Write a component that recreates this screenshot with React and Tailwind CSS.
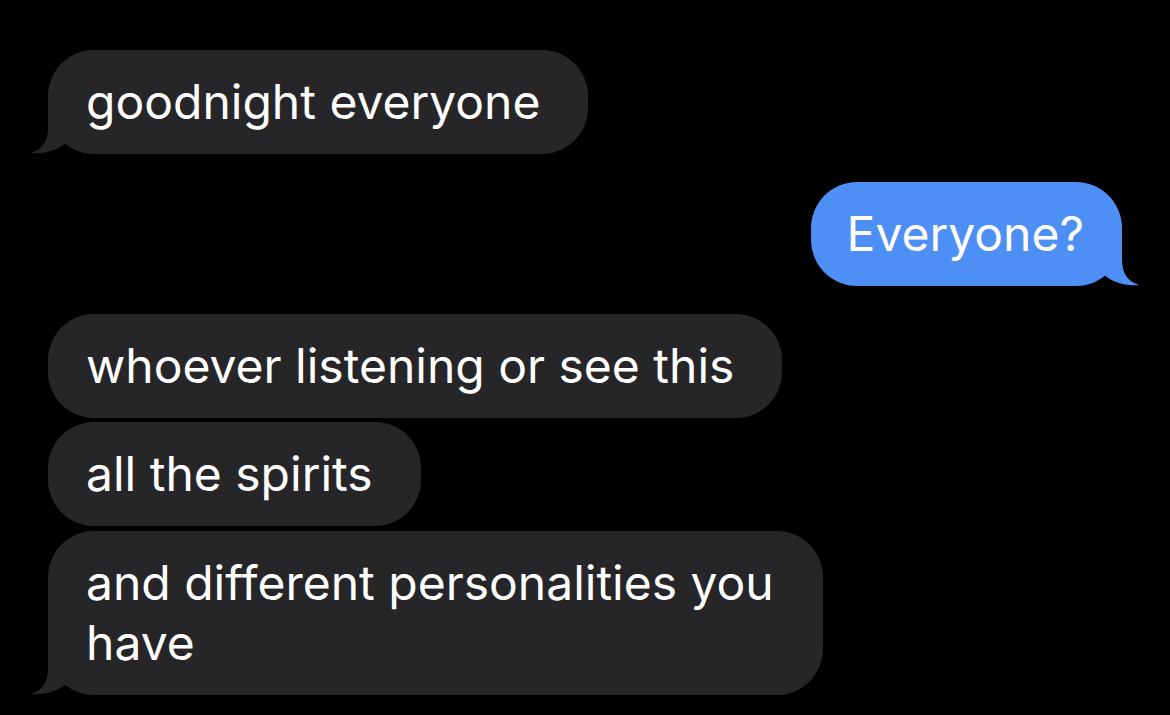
import React from 'react';

const Tail = ({ side, color }) => (
  <svg
    className={side === 'left' ? 'absolute left-[-17px] bottom-0' : 'absolute right-[-17px] bottom-0 -scale-x-100'}
    width="40"
    height="50"
    viewBox="0 0 40 50"
  >
    <path d="M17 0 L17 23 C17 37 12 45 0 49 C14 50.5 27 46 36 38 L40 30 L40 0 Z" fill={color} />
  </svg>
);

const Bubble = ({ text, tail, out, className = '' }) => (
  <div
    className={`relative rounded-[46px] pt-[22px] pb-[22px] text-[48px] leading-[60px] text-white max-w-[775px] ${
      out ? 'bg-[#4d8ff5] self-end mr-[48px] pl-[36px] pr-[38px]' : 'bg-[#262628] self-start pl-[38px] pr-[48px]'
    } ${className}`}
  >
    {tail && <Tail side={out ? 'right' : 'left'} color={out ? '#4d8ff5' : '#262628'} />}
    <span className="relative">{text}</span>
  </div>
);

export default function App() {
  return (
    <div
      className="w-[1170px] h-[715px] bg-black overflow-hidden flex flex-col pt-[50px] pl-[48px]"
      style={{ fontFamily: 'Inter, "Liberation Sans", sans-serif' }}
    >
      <Bubble text="goodnight everyone" tail />
      <Bubble text="Everyone?" tail out className="mt-[28px]" />
      <Bubble text="whoever listening or see this" className="mt-[28px]" />
      <Bubble text="all the spirits" className="mt-[4px]" />
      <Bubble text="and different personalities you have" tail className="mt-[5px] w-[775px]" />
    </div>
  );
}
